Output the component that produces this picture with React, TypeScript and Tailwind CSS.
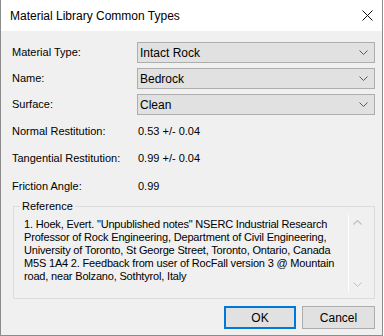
import React from 'react';

const font = { fontFamily: '"Liberation Sans", Arial, sans-serif' };

const Chevron: React.FC<{ className?: string; color?: string }> = ({ className = '', color = '#5a5a5a' }) => (
    <svg width="9" height="5" viewBox="0 0 9 5" className={className}>
        <path d="M0.5 0.5 L4.5 4.5 L8.5 0.5" fill="none" stroke={color} strokeWidth="1" />
    </svg>
);

const ComboBox: React.FC<{ value: string }> = ({ value }) => (
    <div className="flex-1 h-[21px] bg-[#e1e1e1] border border-[#adadad] flex items-center pl-[2px] pr-[6px]">
        <span className="flex-1 text-[12px] text-black leading-none">{value}</span>
        <Chevron />
    </div>
);

const ComboRow: React.FC<{ label: string; value: string }> = ({ label, value }) => (
    <div className="flex items-center h-[21px]">
        <div className="w-[125px] text-[11px] text-black">{label}</div>
        <ComboBox value={value} />
    </div>
);

const InfoRow: React.FC<{ label: string; value: string; className?: string }> = ({ label, value, className = '' }) => (
    <div className={`flex items-center h-[20px] ${className}`}>
        <div className="w-[126px] text-[11px] text-black">{label}</div>
        <div className="text-[11px] text-black">{value}</div>
    </div>
);

const referenceLines = [
    '1. Hoek, Evert. "Unpublished notes" NSERC Industrial Research',
    'Professor of Rock Engineering, Department of Civil Engineering,',
    'University of Toronto, St George Street, Toronto, Ontario, Canada',
    'M5S 1A4 2. Feedback from user of RocFall version 3 @ Mountain',
    'road, near Bolzano, Sothtyrol, Italy',
];

export default function App() {
    return (
        <div className="w-[384px] h-[336px] bg-white" style={font}>
            <div className="w-[383px] h-[336px] border-l border-r border-b border-[#8c8c8c] flex flex-col">
                {/* title bar */}
                <div className="h-[31px] bg-white flex items-center pl-[9px] pr-[8px]">
                    <span className="flex-1 text-[12px] text-black">Material Library Common Types</span>
                    <svg width="11" height="11" viewBox="0 0 11 11" className="mr-[1px]">
                        <path d="M0.5 0.5 L10.5 10.5 M10.5 0.5 L0.5 10.5" stroke="#111" strokeWidth="1" />
                    </svg>
                </div>

                {/* body */}
                <div className="flex-1 bg-[#f0f0f0] flex flex-col pl-[11px] pr-[7px] pt-[11px]">
                    <div className="flex flex-col gap-[5px]">
                        <ComboRow label="Material Type:" value="Intact Rock" />
                        <ComboRow label="Name:" value="Bedrock" />
                        <ComboRow label="Surface:" value="Clean" />
                    </div>

                    <InfoRow label="Normal Restitution:" value="0.53 +/- 0.04" className="mt-[6px]" />
                    <InfoRow label="Tangential Restitution:" value="0.99 +/- 0.04" className="mt-[7px]" />
                    <InfoRow label="Friction Angle:" value="0.99" className="mt-[8px]" />

                    {/* reference group */}
                    <div className="relative mt-[10px] ml-[1px] h-[93px] border border-[#dcdcdc]">
                        <span className="absolute left-[6px] top-[-8px] px-[2px] bg-[#f0f0f0] text-[11px] leading-[14px] text-black">
                            Reference
                        </span>
                        <div className="flex mt-[8px] ml-[4px] mr-[9px] h-[77px]">
                            <div className="flex-1 pl-[6px] pt-[3px] text-[11px] leading-[13px] tracking-[-0.18px] text-black">
                                {referenceLines.map((l) => (
                                    <div key={l} className="whitespace-nowrap">{l}</div>
                                ))}
                            </div>
                            <div className="w-[17px] border-l border-white flex flex-col items-center justify-between py-[5px]">
                                <svg width="9" height="5" viewBox="0 0 9 5">
                                    <path d="M0.5 4.5 L4.5 0.5 L8.5 4.5" fill="none" stroke="#c0c0c0" strokeWidth="1.3" />
                                </svg>
                                <Chevron color="#c0c0c0" />
                            </div>
                        </div>
                    </div>

                    {/* buttons */}
                    <div className="flex justify-end gap-[6px] mt-[7px]">
                        <button className="w-[72px] h-[23px] bg-[#e1e1e1] border-2 border-[#0078d7] text-[12px] text-black">
                            OK
                        </button>
                        <button className="w-[73px] h-[23px] bg-[#e1e1e1] border border-[#adadad] text-[12px] text-black">
                            Cancel
                        </button>
                    </div>
                </div>
            </div>
        </div>
    );
}
